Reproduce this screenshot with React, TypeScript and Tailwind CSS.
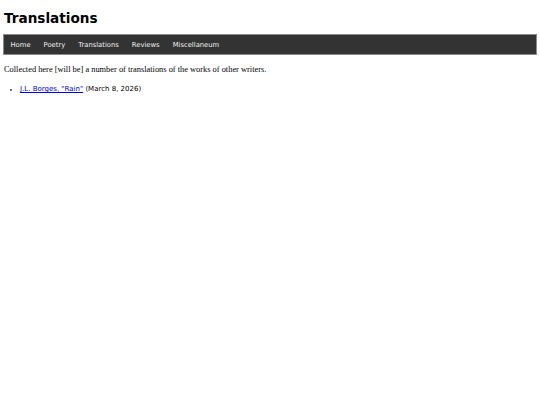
export default function App() {
  const links = ["Home", "Poetry", "Translations", "Reviews", "Miscellaneum"];

  return (
    <div className="min-h-[405px] bg-white px-[3px] text-black">
      <h1 className="pt-[10px] pl-[1px] font-['DejaVu_Sans',Verdana,sans-serif] text-[13.6px] font-bold leading-[16px]">
        Translations
      </h1>

      <nav className="mt-[8px] flex h-[21px] items-center border border-[#8a8a8a] bg-[#333333] font-['DejaVu_Sans',Verdana,sans-serif] text-[6.8px] text-[#f0f0f0]">
        {links.map((l) => (
          <a key={l} href="#" className="px-[6.5px] pt-[2px] leading-[17px]">
            {l}
          </a>
        ))}
      </nav>

      <p className="mt-[10px] pl-[1px] font-['Liberation_Serif','Times_New_Roman',serif] text-[8.4px] leading-[10px]">
        Collected here [will be] a number of translations of the works of other writers.
      </p>

      <ul className="mt-[10px] list-disc pl-[17px] font-['DejaVu_Sans',Verdana,sans-serif] text-[7px] leading-[9px] marker:text-[5px] marker:text-[#444]">
        <li>
          <a href="#" className="text-[#0000ee] underline">
            J.L. Borges, "Rain"
          </a>{" "}
          (March 8, 2026)
        </li>
      </ul>
    </div>
  );
}
